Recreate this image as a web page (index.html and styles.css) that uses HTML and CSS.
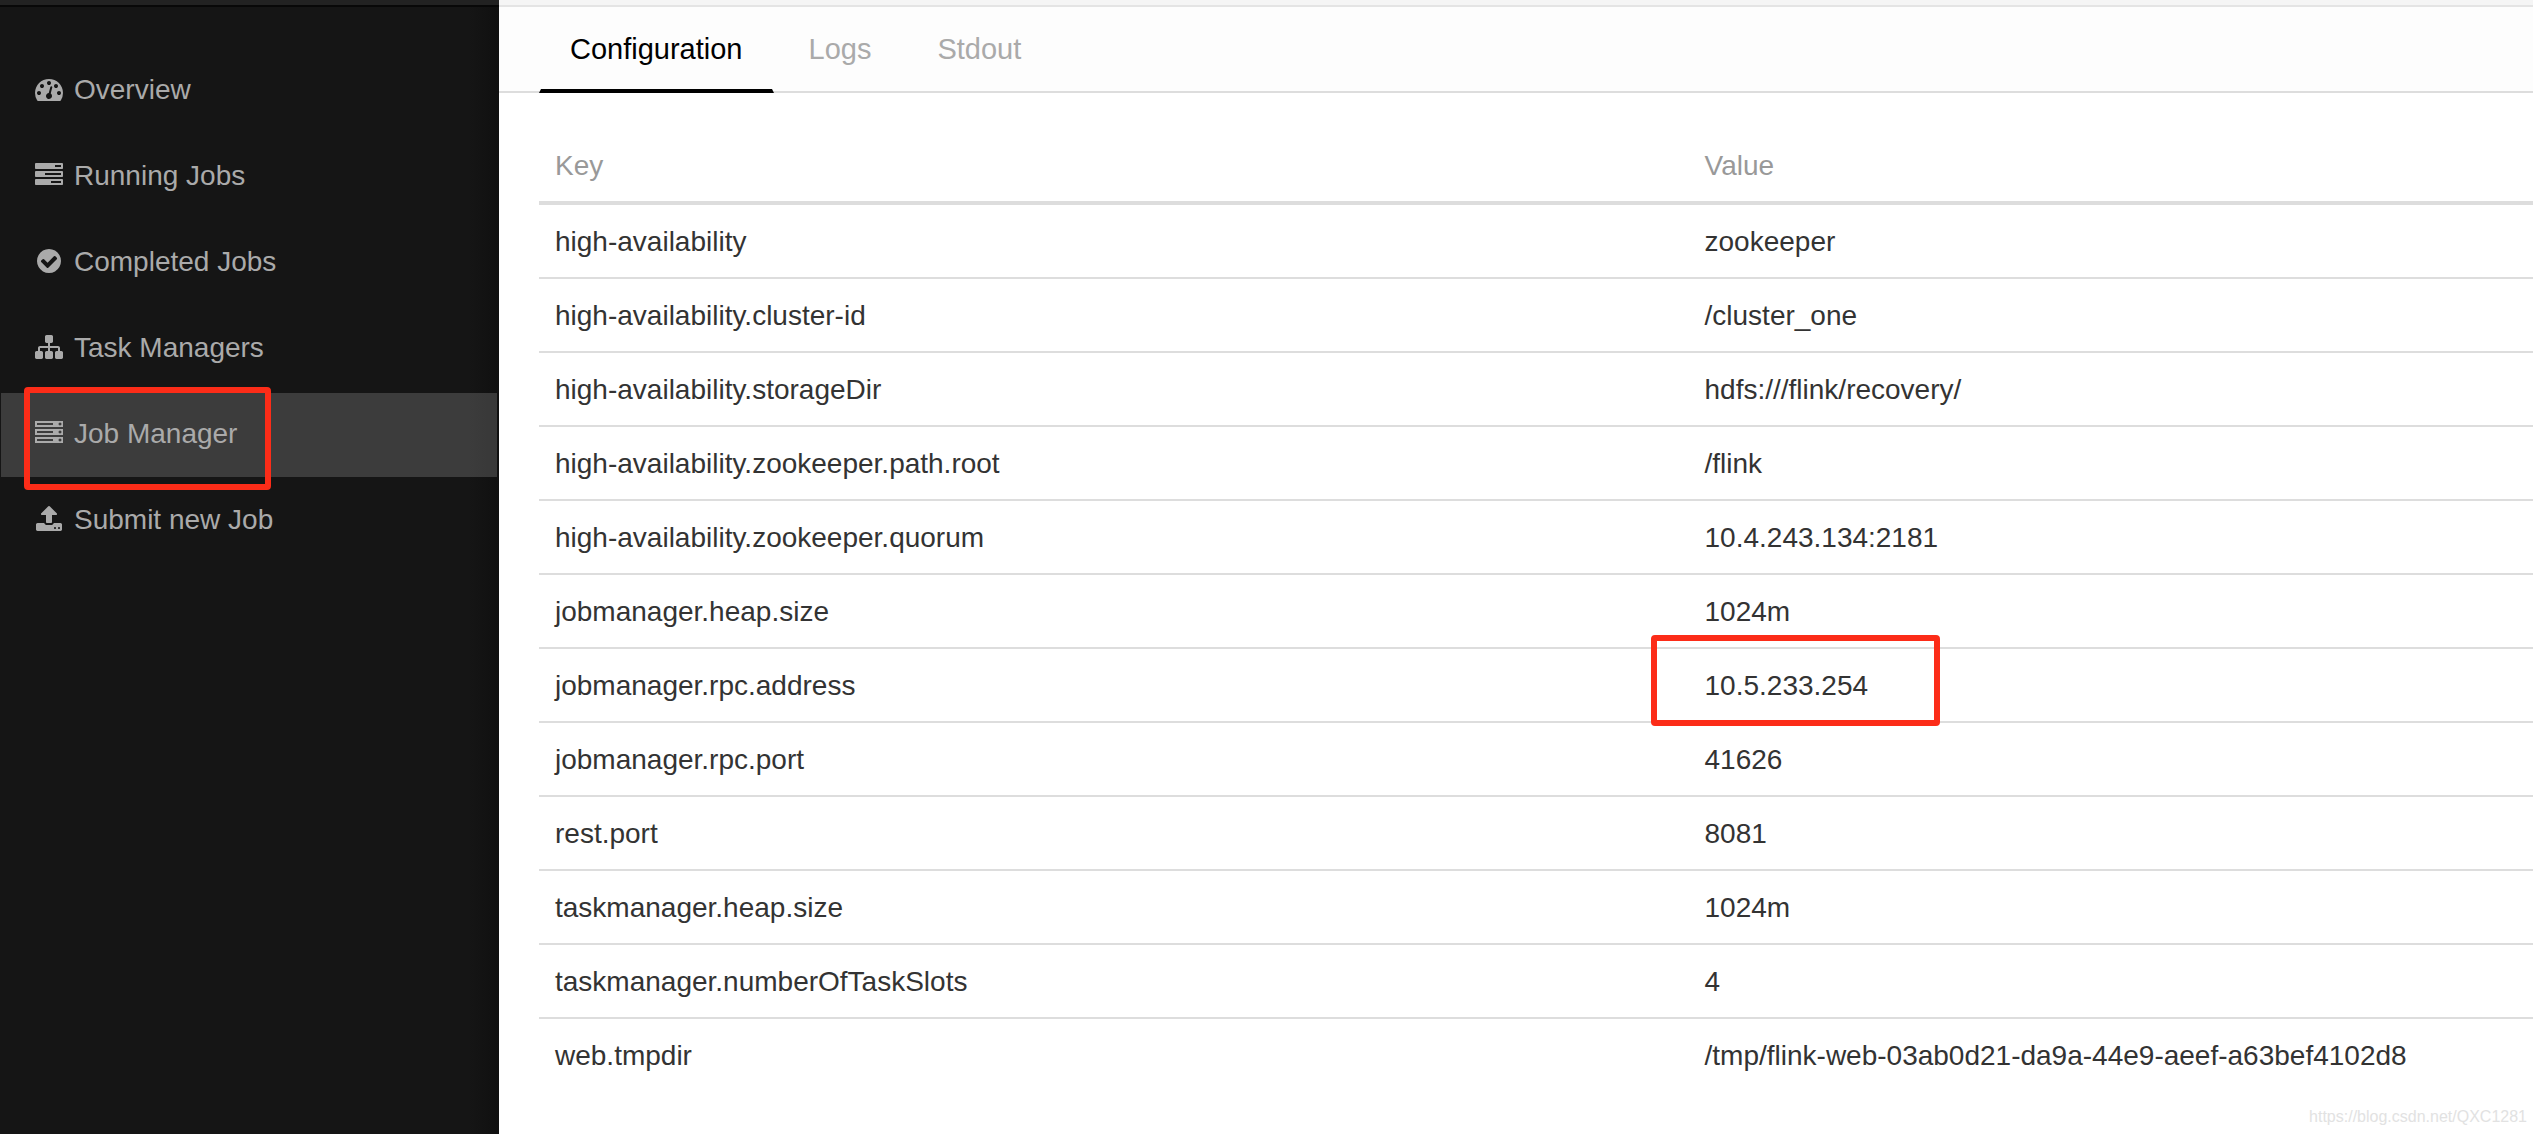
FILE: index.html
```html
<!DOCTYPE html>
<html lang="en">
<head>
<meta charset="utf-8">
<title>Apache Flink Web Dashboard</title>
<link rel="stylesheet" href="styles.css">
</head>
<body>
<div class="layout">
  <aside class="sidebar">
    <div class="sidebar-header"></div>
    <nav class="menu">
      <a class="menu-item" href="#overview"><svg class="icon" viewBox="0 0 1792 1792" aria-hidden="true"><path d="M384 1152q0-53-37.500-90.500t-90.500-37.500-90.500 37.500-37.500 90.500 37.500 90.500 90.500 37.500 90.500-37.500 37.500-90.500zm192-448q0-53-37.500-90.500t-90.500-37.500-90.500 37.500-37.500 90.500 37.500 90.500 90.500 37.500 90.500-37.500 37.500-90.500zm428 481l101-382q6-26-7.500-48.500t-38.500-29.500-48 6.500-30 39.500l-101 382q-60 5-107 43.500t-63 98.500q-20 77 20 146t117 89 146-20 89-117q16-60-6-117t-72-91zm660-33q0-53-37.500-90.500t-90.500-37.500-90.500 37.500-37.500 90.500 37.500 90.500 90.500 37.500 90.500-37.500 37.500-90.500zm-640-640q0-53-37.500-90.500t-90.500-37.500-90.500 37.500-37.500 90.500 37.500 90.500 90.500 37.500 90.500-37.500 37.500-90.500zm448 192q0-53-37.500-90.500t-90.500-37.500-90.500 37.500-37.500 90.500 37.500 90.500 90.500 37.500 90.500-37.500 37.500-90.500zm320 448q0 261-141 483-19 29-54 29h-1402q-35 0-54-29-141-221-141-483 0-182 71-348t191-286 286-191 348-71 348 71 286 191 191 286 71 348z"/></svg>Overview</a>
      <a class="menu-item" href="#running"><svg class="icon" viewBox="0 0 1792 1792" aria-hidden="true"><path d="M1024 1408h640v-128h-640v128zm-384-512h1024v-128h-1024v128zm640-512h384v-128h-384v128zm512 832v256q0 26-19 45t-45 19h-1664q-26 0-45-19t-19-45v-256q0-26 19-45t45-19h1664q26 0 45 19t19 45zm0-512v256q0 26-19 45t-45 19h-1664q-26 0-45-19t-19-45v-256q0-26 19-45t45-19h1664q26 0 45 19t19 45zm0-512v256q0 26-19 45t-45 19h-1664q-26 0-45-19t-19-45v-256q0-26 19-45t45-19h1664q26 0 45 19t19 45z"/></svg>Running Jobs</a>
      <a class="menu-item" href="#completed"><svg class="icon" viewBox="0 0 1792 1792" aria-hidden="true"><path d="M1412 734q0-28-18-46l-91-90q-19-19-45-19t-45 19l-408 407-226-226q-19-19-45-19t-45 19l-91 90q-18 18-18 46 0 27 18 45l362 362q19 19 45 19 27 0 46-19l543-543q18-18 18-45zm252 162q0 209-103 385.500t-279.500 279.500-385.500 103-385.500-103-279.500-279.500-103-385.500 103-385.500 279.500-279.500 385.500-103 385.500 103 279.500 279.500 103 385.500z"/></svg>Completed Jobs</a>
      <a class="menu-item" href="#taskmanagers"><svg class="icon" viewBox="0 0 1792 1792" aria-hidden="true"><path d="M1792 1248v320q0 40-28 68t-68 28h-320q-40 0-68-28t-28-68v-320q0-40 28-68t68-28h96v-192h-512v192h96q40 0 68 28t28 68v320q0 40-28 68t-68 28h-320q-40 0-68-28t-28-68v-320q0-40 28-68t68-28h96v-192h-512v192h96q40 0 68 28t28 68v320q0 40-28 68t-68 28h-320q-40 0-68-28t-28-68v-320q0-40 28-68t68-28h96v-192q0-52 38-90t90-38h512v-192h-96q-40 0-68-28t-28-68v-320q0-40 28-68t68-28h320q40 0 68 28t28 68v320q0 40-28 68t-68 28h-96v192h512q52 0 90 38t38 90v192h96q40 0 68 28t28 68z"/></svg>Task Managers</a>
      <a class="menu-item active" href="#jobmanager" aria-current="page"><svg class="icon" viewBox="0 0 1792 1792" aria-hidden="true"><path d="M128 1408h1024v-128h-1024v128zm0-512h1024v-128h-1024v128zm1568 448q0-40-28-68t-68-28-68 28-28 68 28 68 68 28 68-28 28-68zm-1568-960h1024v-128h-1024v128zm1568 448q0-40-28-68t-68-28-68 28-28 68 28 68 68 28 68-28 28-68zm0-512q0-40-28-68t-68-28-68 28-28 68 28 68 68 28 68-28 28-68zm96 832v384h-1792v-384h1792zm0-512v384h-1792v-384h1792zm0-512v384h-1792v-384h1792z"/></svg>Job Manager<span class="marker marker-menu"></span></a>
      <a class="menu-item" href="#submit"><svg class="icon" viewBox="0 0 1792 1792" aria-hidden="true"><path d="M1344 1472q0-26-19-45t-45-19-45 19-19 45 19 45 45 19 45-19 19-45zm256 0q0-26-19-45t-45-19-45 19-19 45 19 45 45 19 45-19 19-45zm128-224v320q0 40-28 68t-68 28h-1472q-40 0-68-28t-28-68v-320q0-40 28-68t68-28h427q21 56 70.500 92t110.500 36h256q61 0 110.500-36t70.500-92h427q40 0 68 28t28 68zm-325-648q-17 40-59 40h-256v448q0 26-19 45t-45 19h-256q-26 0-45-19t-19-45v-448h-256q-42 0-59-40-17-39 14-69l448-448q18-19 45-19t45 19l448 448q31 30 14 69z"/></svg>Submit new Job</a>
    </nav>
  </aside>
  <main class="content">
    <div class="navbar"></div>
    <nav class="tabs">
      <a class="tab active" href="#config">Configuration</a>
      <a class="tab" href="#logs">Logs</a>
      <a class="tab" href="#stdout">Stdout</a>
    </nav>
    <div class="panel">
      <table class="config">
        <thead>
          <tr><th class="key" scope="col">Key</th><th scope="col">Value</th></tr>
        </thead>
        <tbody>
          <tr><td>high-availability</td><td>zookeeper</td></tr>
          <tr><td>high-availability.cluster-id</td><td>/cluster_one</td></tr>
          <tr><td>high-availability.storageDir</td><td>hdfs:///flink/recovery/</td></tr>
          <tr><td>high-availability.zookeeper.path.root</td><td>/flink</td></tr>
          <tr><td>high-availability.zookeeper.quorum</td><td>10.4.243.134:2181</td></tr>
          <tr><td>jobmanager.heap.size</td><td>1024m</td></tr>
          <tr><td>jobmanager.rpc.address</td><td class="marked">10.5.233.254<span class="marker marker-value"></span></td></tr>
          <tr><td>jobmanager.rpc.port</td><td>41626</td></tr>
          <tr><td>rest.port</td><td>8081</td></tr>
          <tr><td>taskmanager.heap.size</td><td>1024m</td></tr>
          <tr><td>taskmanager.numberOfTaskSlots</td><td>4</td></tr>
          <tr><td>web.tmpdir</td><td>/tmp/flink-web-03ab0d21-da9a-44e9-aeef-a63bef4102d8</td></tr>
        </tbody>
      </table>
    </div>
    <span class="watermark">https://blog.csdn.net/QXC1281</span>
  </main>
</div>
</body>
</html>
```
FILE: styles.css
```css
* {
  box-sizing: border-box;
}

body {
  margin: 0;
  background: #fff;
  color: #333;
  font-family: "Liberation Sans", Arial, sans-serif;
  font-size: 28px;
  line-height: 40px;
}

a {
  color: inherit;
  text-decoration: none;
}

.layout {
  display: flex;
  min-height: 100vh;
}

/* Sidebar */
.sidebar {
  flex: none;
  width: 499px;
  background: linear-gradient(to left, #101010, #151515 30px);
  color: #aaa;
}

.sidebar-header {
  height: 7px;
  background: #222;
  border-bottom: 2px solid #080808;
}

.menu {
  display: flex;
  flex-direction: column;
  gap: 2px;
  padding: 42px 2px 0 1px;
}

.menu-item {
  position: relative;
  display: flex;
  gap: 11px;
  padding: 21px 34px 23px;
}

.menu-item.active {
  background: rgba(255, 255, 255, 0.17);
}

.icon {
  width: 28px;
  height: 28px;
  margin-top: 5px;
  fill: currentColor;
}

/* Content */
.content {
  position: relative;
  flex: 1;
  min-width: 0;
}

.navbar {
  height: 7px;
  background: #f5f5f5;
  border-bottom: 2px solid #e4e4e4;
}

.tabs {
  display: flex;
  gap: 4px;
  padding-left: 40px;
  background: #fdfdfd;
  box-shadow: inset 0 -2px #ddd;
  color: #aaa;
  font-size: 29px;
}

.tab {
  padding: 22px 29px 20px;
  border: 2px solid transparent;
  border-width: 0 2px 4px;
}

.tab.active {
  border-bottom-color: #000;
  color: #000;
}

.panel {
  padding: 36px 0 36px 40px;
}

.config {
  width: 100%;
  border-collapse: separate;
  border-spacing: 0;
  table-layout: fixed;
}

.config th,
.config td {
  padding: 17px 16px 15px;
  text-align: left;
  white-space: nowrap;
}

.config th {
  border-bottom: 4px solid #ddd;
  color: #999;
  font-weight: normal;
}

.config .key {
  width: 57.65%;
}

.config tr + tr td {
  border-top: 2px solid #ddd;
}

/* Red highlight frames */
.marked {
  position: relative;
}

.marker {
  position: absolute;
  border: 6px solid #fc2c18;
  border-radius: 4px;
  pointer-events: none;
}

.marker-menu {
  top: -6px;
  left: 23px;
  width: 247px;
  height: 103px;
}

.marker-value {
  top: -14px;
  left: -38px;
  width: 289px;
  height: 91px;
}

.watermark {
  position: absolute;
  right: 6px;
  bottom: 7px;
  color: #e2e2e2;
  font-size: 16px;
  line-height: 20px;
}
```
